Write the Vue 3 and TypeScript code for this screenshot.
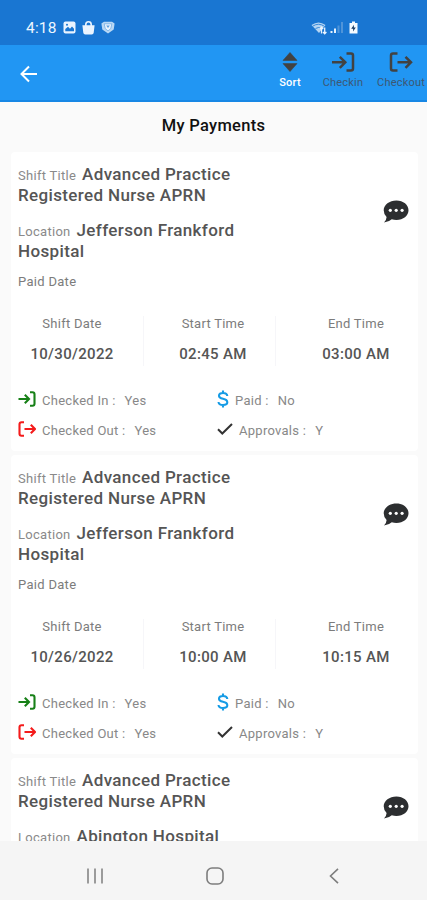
<script setup lang="ts">
interface Shift {
  id: number
  title: string
  location: string
  date: string
  start: string
  end: string
  checkedIn: string
  checkedOut: string
  paid: string
  approvals: string
}

const title = 'Advanced Practice Registered Nurse APRN'
const shifts: Shift[] = [
  { id: 1, title, location: 'Jefferson Frankford Hospital', date: '10/30/2022', start: '02:45 AM', end: '03:00 AM', checkedIn: 'Yes', checkedOut: 'Yes', paid: 'No', approvals: 'Y' },
  { id: 2, title, location: 'Jefferson Frankford Hospital', date: '10/26/2022', start: '10:00 AM', end: '10:15 AM', checkedIn: 'Yes', checkedOut: 'Yes', paid: 'No', approvals: 'Y' },
]
const nextShift = { title, location: 'Abington Hospital' }
</script>

<template>
  <div class="phone">
    <div class="status">
      <div class="status-left">
        <span class="clock">4:18</span>
        <svg width="13" height="13" viewBox="0 0 13 13"><rect x=".5" y=".5" width="12" height="12" rx="2" fill="#eaf4ff" /><path d="M2.3 10.2V8L5 5.8l2 2 2-2.2 2 2.2v2.4z" fill="#1976d2" /><circle cx="4" cy="3.7" r="1" fill="#1976d2" /></svg>
        <svg width="13" height="14" viewBox="0 0 13 14"><path d="M.4 4.3h12.2l-.9 7.5q-.2 1.8-2 1.8H3.3q-1.8 0-2-1.8z" fill="#eaf4ff" /><path d="M3.800 5V3.500a2.700 2.700 0 0 1 5.400 0V5" fill="none" stroke="#eaf4ff" stroke-width="1.600" /></svg>
        <svg width="14" height="13" viewBox="0 0 14 13"><path d="M3 .8h8l2.600 1.800-.9 5.800L7 12.600 1.300 8.400.4 2.600z" fill="#b9d8f5" /><path d="M3.200 2.800h7.600L9.800 7.500 7 10 4.200 7.500z" fill="#eaf4ff" stroke="#71ace3" stroke-width=".8" /><path d="M5.200 4.500h3.600L7 7z" fill="#5c9edd" /></svg>
      </div>
      <div class="status-right">
        <svg width="16" height="14" viewBox="0 0 16 14"><path d="M.5 4Q7.500-1 14.500 4L8 12z" fill="#b5d5f3" /><path d="M2 5q5.500-3.500 11 0M4.500 7.500q3-2 6 0" fill="none" stroke="#1976d2" stroke-width=".8" /><path d="M10.500 12.500V6.500M8.800 8l1.700-1.800L12.200 8M13.700 6.500v6M12 11l1.700 1.800 1.700-1.800" fill="none" stroke="#eaf4ff" stroke-width="1.300" /></svg>
        <svg width="13" height="13" viewBox="0 0 13 13"><path d="M.500 10h2v2h-2zM4 7.500h2V12H4z" fill="#e5f1fd" /><path d="M7.500 4.500h2V12h-2zM11 1h2v11h-2z" fill="#4f94d9" /></svg>
        <svg class="battery" width="9" height="13" viewBox="0 0 9 13"><path d="M3 .5h3V2h2.500v10.500H.5V2H3z" fill="#f4faff" /><path d="M5 3.700 2.200 7.700h2L4 10.600l2.800-4h-2z" fill="#173a62" /></svg>
      </div>
    </div>

    <header class="appbar">
      <svg class="back" width="18" height="18" viewBox="0 0 18 18"><path d="M17 9H2M9 1.500 1.500 9 9 16.500" fill="none" stroke="#fff" stroke-width="2" /></svg>
      <div class="actions">
        <div class="action sort">
          <svg width="24" height="20" viewBox="0 0 24 20"><path d="M12 .5 19 8.400H5zM5 11.600h14L12 19.500z" fill="#424242" stroke="#424242" stroke-width=".6" stroke-linejoin="round" /></svg>
          <span>Sort</span>
        </div>
        <div class="action checkin">
          <svg width="24" height="20" viewBox="0 0 24 20"><path d="M1 10.300h13M8.800 4.800 14.300 10.300 8.800 15.800M15.500 1.500h4.500q2 0 2 2v13q0 2-2 2h-4.500" fill="none" stroke="#424242" stroke-width="2.500" /></svg>
          <span>Checkin</span>
        </div>
        <div class="action checkout">
          <svg width="24" height="20" viewBox="0 0 24 20"><path d="M8.500 10.300h13.500M16.500 4.800 22 10.300 16.500 15.800M8.500 1.500H4q-2 0-2 2v13q0 2 2 2h4.500" fill="none" stroke="#424242" stroke-width="2.500" /></svg>
          <span>Checkout</span>
        </div>
      </div>
    </header>

    <main class="content">
      <h1>My Payments</h1>
      <div class="list">
        <article v-for="s in shifts" :key="s.id" class="card">
          <div class="top">
            <div class="details">
              <p><span class="label">Shift Title</span><b>{{ s.title }}</b></p>
              <p><span class="label">Location</span><b>{{ s.location }}</b></p>
            </div>
            <svg class="chat" width="26" height="23" viewBox="0 0 26 23"><path d="M13.400.5C20.300.5 25.500 4.800 25.500 10.200S20.300 20 13.400 20q-2.400 0-4.600-.7Q6 22 1 22.500q2.500-2.500 2.600-5.500Q.7 14.200.7 10.200C.7 4.800 6.500.5 13.400.5z" fill="#2c2e30" /><circle cx="7.300" cy="10.300" r="1.600" fill="#fff" /><circle cx="13.200" cy="10.300" r="1.600" fill="#fff" /><circle cx="19.100" cy="10.300" r="1.600" fill="#fff" /></svg>
          </div>
          <div class="paid-date">Paid Date</div>
          <div class="times">
            <div class="time"><span>Shift Date</span><strong>{{ s.date }}</strong></div>
            <div class="time"><span>Start Time</span><strong>{{ s.start }}</strong></div>
            <div class="time"><span>End Time</span><strong>{{ s.end }}</strong></div>
          </div>
          <div class="flags">
            <div class="flag">
              <svg width="18" height="16" viewBox="0 0 18 16"><path d="M.500 8h10.500M6.800 3.800 11 8l-4.200 4.200M12 1.200h2.500q2 0 2 2v9.600q0 2-2 2H12" fill="none" stroke="#178017" stroke-width="2.100" /></svg>
              <span>Checked In :</span><span class="val">{{ s.checkedIn }}</span>
            </div>
            <div class="flag">
              <svg class="dollar" width="12" height="18" viewBox="0 0 12 18"><path d="M10.300 6Q10 3 6 3 2 3 2 5.700 2 8 6 8.800q4.300.8 4.300 3.500Q10.300 15 6 15 1.800 15 1.500 12M6 .5V3M6 15v2.500" fill="none" stroke="#159be5" stroke-width="2.100" /></svg>
              <span>Paid :</span><span class="val">{{ s.paid }}</span>
            </div>
            <div class="flag">
              <svg width="18" height="16" viewBox="0 0 18 16"><path d="M6.500 8h10.500M12.800 3.800 17 8l-4.200 4.200M6 1.200H3.500q-2 0-2 2v9.600q0 2 2 2H6" fill="none" stroke="#f41b1b" stroke-width="2.100" /></svg>
              <span>Checked Out :</span><span class="val">{{ s.checkedOut }}</span>
            </div>
            <div class="flag">
              <svg class="tick" width="16" height="12" viewBox="0 0 16 12"><path d="M1 6.200 5.300 10.500 15 1" fill="none" stroke="#333" stroke-width="2" /></svg>
              <span>Approvals :</span><span class="val">{{ s.approvals }}</span>
            </div>
          </div>
        </article>
        <article class="card">
          <div class="top">
            <div class="details">
              <p><span class="label">Shift Title</span><b>{{ nextShift.title }}</b></p>
              <p><span class="label">Location</span><b>{{ nextShift.location }}</b></p>
            </div>
            <svg class="chat" width="26" height="23" viewBox="0 0 26 23"><path d="M13.400.5C20.300.5 25.500 4.800 25.500 10.200S20.300 20 13.400 20q-2.400 0-4.600-.7Q6 22 1 22.500q2.500-2.500 2.600-5.500Q.7 14.200.7 10.200C.7 4.800 6.500.5 13.400.5z" fill="#2c2e30" /><circle cx="7.300" cy="10.300" r="1.600" fill="#fff" /><circle cx="13.200" cy="10.300" r="1.600" fill="#fff" /><circle cx="19.100" cy="10.300" r="1.600" fill="#fff" /></svg>
          </div>
        </article>
      </div>
    </main>

    <nav class="nav">
      <svg width="16" height="16" viewBox="0 0 16 16"><path d="M1 .5v15M8 .5v15M15 .5v15" stroke="#7d7d7d" stroke-width="1.500" /></svg>
      <svg class="home" width="18" height="18" viewBox="0 0 18 18"><rect x="1" y="1" width="16" height="16" rx="5" fill="none" stroke="#7d7d7d" stroke-width="1.600" /></svg>
      <svg width="10" height="16" viewBox="0 0 10 16"><path d="M9 .8 1.500 8 9 15.200" fill="none" stroke="#7d7d7d" stroke-width="1.600" /></svg>
    </nav>
  </div>
</template>

<style>
body { margin: 0; }
</style>

<style scoped>
.phone { width: 427px; height: 900px; display: flex; flex-direction: column; overflow: hidden; background: #fafafa; font-family: Roboto, "Liberation Sans", sans-serif; }
svg { display: block; flex: none; }
.status { height: 45px; flex: none; box-sizing: border-box; padding: 10px 69px 0 26px; display: flex; align-items: center; justify-content: space-between; background: #1976d2; color: #edf6ff; }
.status-left { display: flex; align-items: center; gap: 6px; }
.clock { font-size: 15.500px; line-height: 18px; letter-spacing: .2px; }
.status-right { display: flex; align-items: center; gap: 3px; }
.battery { margin-left: 3px; }
.appbar { height: 57px; flex: none; box-sizing: border-box; border-bottom: 2px solid #1787e5; padding-left: 20px; display: flex; justify-content: space-between; align-items: center; background: #2196f3; }
.back { margin-top: 2px; }
.actions { display: flex; align-self: flex-start; padding-top: 7px; }
.action { display: flex; flex-direction: column; align-items: center; gap: 4px; font-size: 11px; line-height: 14px; color: #3d5873; letter-spacing: .2px; }
.sort { width: 50px; color: #fff; font-weight: 500; }
.checkin { width: 56px; }
.checkout { width: 60px; margin-right: -4px; }
.content { flex: none; height: 739px; overflow: hidden; }
h1 { margin: 0; height: 50px; box-sizing: border-box; padding-top: 13px; text-align: center; font-size: 16.500px; line-height: 21px; font-weight: 500; letter-spacing: .3px; color: #111; }
.list { display: flex; flex-direction: column; gap: 4px; padding: 0 9px 0 11px; }
.card { height: 299px; flex: none; background: #fff; border-radius: 4px; }
.top { display: flex; justify-content: space-between; align-items: center; padding: 12px 9px 0 7px; }
.details { display: flex; flex-direction: column; gap: 14px; width: 240px; }
.details p { margin: 0; font-size: 17px; line-height: 21px; color: #555; letter-spacing: .36px; }
.details b { font-weight: 500; }
.label { font-size: 13px; line-height: 13px; letter-spacing: .28px; color: #8a8a8a; margin-right: 6px; }
.chat { margin-bottom: 3px; }
.paid-date { margin: 11px 0 0 7px; font-size: 13px; line-height: 18px; color: #7c7c7c; letter-spacing: .3px; }
.times { display: grid; grid-template-columns: 133px 132px 142px; height: 50px; margin-top: 25px; }
.time { display: flex; flex-direction: column; align-items: center; text-align: center; box-sizing: border-box; border-right: 1px solid #f6f6f9; padding-right: 10px; font-size: 13px; line-height: 15px; color: #7c7c7c; letter-spacing: .25px; gap: 14px; }
.time:nth-child(2) { padding: 0 0 0 7px; }
.time:nth-child(3) { padding: 0 0 0 18px; border: 0; }
.time strong { font-size: 15px; line-height: 18px; font-weight: 500; color: #555; letter-spacing: .33px; }
.flags { display: grid; grid-template-columns: 199px 1fr; grid-auto-rows: 30px; padding: 19px 0 0 7px; }
.flag { display: flex; align-items: center; font-size: 13px; line-height: 18px; color: #888; letter-spacing: .27px; }
.flag svg { margin: -2px 6px 0 0; }
.flag span { padding-top: 1px; }
.flag .val { margin-left: 9px; }
.nav { flex: 1; display: flex; align-items: center; justify-content: space-between; padding: 11px 88px 0 87px; background: #f5f5f5; }
.home { margin-right: 3px; }
</style>
